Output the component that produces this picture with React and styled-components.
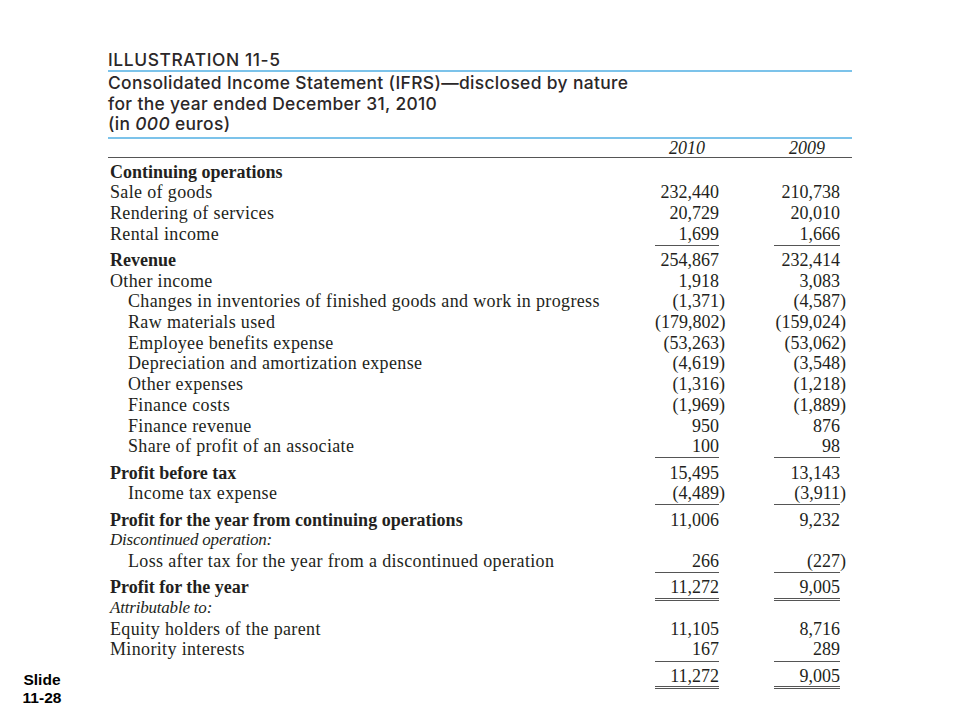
import styled, { createGlobalStyle } from 'styled-components';

//region [[ Styles ]]
const GlobalStyle = createGlobalStyle`
    html, body {
        margin: 0;
        padding: 0;
        background: #ffffff;
    }
`;

const Page = styled.div`
    width: 960px;
    height: 720px;
    display: grid;
    grid-template-columns: 108px 744px;
    color: #231f20;
`;

const SlideTag = styled.div`
    align-self: end;
    width: 84px;
    padding-bottom: 13px;
    text-align: center;
    font-family: 'Liberation Sans', Arial, sans-serif;
    font-weight: 700;
    font-size: 15.5px;
    line-height: 18px;
    color: #000000;
`;

const Statement = styled.div`
    padding-top: 50px;
    display: flex;
    flex-direction: column;
`;

const Heading = styled.div`
    font-family: Inter, 'Liberation Sans', sans-serif;
    font-weight: 500;
    font-size: 17.4px;
    letter-spacing: 0.35px;
    color: #2b2728;
    border-bottom: 2px solid #7cc3ea;
`;

const Illustration = styled(Heading)`
    line-height: 20px;
    letter-spacing: 0.6px;
`;

const TitleBlock = styled(Heading)`
    padding: 1px 0 2px;
    line-height: 20.5px;

    em {
        font-style: italic;
    }
`;

const Grid = styled.div`
    display: grid;
    grid-template-columns: 1fr 64px 66px;
    column-gap: 55px;
    padding-right: 12px;
    font-family: 'Liberation Serif', 'Times New Roman', serif;
`;

const YearRow = styled(Grid)`
    line-height: 18px;
    font-size: 18px;
    font-style: italic;
    border-bottom: 1.5px solid #555555;
    margin-bottom: 4px;
`;

const Year = styled.div`
    text-align: center;
`;

const Row = styled(Grid)`
    font-size: 18px;
    line-height: 20.7px;
    margin-top: ${(p) => (p.$spaced ? '5.6px' : '0')};
`;

const Label = styled.div`
    padding-left: ${(p) => (p.$indent ? '20px' : '2px')};
    font-weight: ${(p) => (p.$bold ? 700 : 400)};
    font-style: ${(p) => (p.$italic ? 'italic' : 'normal')};
    font-size: ${(p) => (p.$italic ? '17px' : '18px')};
    letter-spacing: ${(p) => (p.$bold ? '0' : p.$italic ? '-0.2px' : '0.35px')};
    white-space: nowrap;
`;

const Amount = styled.div`
    text-align: right;
    white-space: nowrap;
    font-size: 18px;
    border-bottom: ${(p) =>
        p.$rule === 'double'
            ? '3px double #555555'
            : p.$rule === 'single'
              ? '1.5px solid #555555'
              : 'none'};
    margin-bottom: ${(p) =>
        p.$rule === 'double' ? '-3px' : p.$rule === 'single' ? '-1.5px' : '0'};
`;

const Close = styled.span`
    margin-right: -6px;
`;
//endregion [[ Styles ]]

const rows = [
    { label: 'Continuing operations', bold: true },
    { label: 'Sale of goods', a: '232,440', b: '210,738' },
    { label: 'Rendering of services', a: '20,729', b: '20,010' },
    { label: 'Rental income', a: '1,699', b: '1,666', rule: 'single' },
    { label: 'Revenue', bold: true, a: '254,867', b: '232,414', spaced: true },
    { label: 'Other income', a: '1,918', b: '3,083' },
    { label: 'Changes in inventories of finished goods and work in progress', indent: true, a: '(1,371)', b: '(4,587)' },
    { label: 'Raw materials used', indent: true, a: '(179,802)', b: '(159,024)' },
    { label: 'Employee benefits expense', indent: true, a: '(53,263)', b: '(53,062)' },
    { label: 'Depreciation and amortization expense', indent: true, a: '(4,619)', b: '(3,548)' },
    { label: 'Other expenses', indent: true, a: '(1,316)', b: '(1,218)' },
    { label: 'Finance costs', indent: true, a: '(1,969)', b: '(1,889)' },
    { label: 'Finance revenue', indent: true, a: '950', b: '876' },
    { label: 'Share of profit of an associate', indent: true, a: '100', b: '98', rule: 'single' },
    { label: 'Profit before tax', bold: true, a: '15,495', b: '13,143', spaced: true },
    { label: 'Income tax expense', indent: true, a: '(4,489)', b: '(3,911)', rule: 'single' },
    { label: 'Profit for the year from continuing operations', bold: true, a: '11,006', b: '9,232', spaced: true },
    { label: 'Discontinued operation:', italic: true },
    { label: 'Loss after tax for the year from a discontinued operation', indent: true, a: '266', b: '(227)', rule: 'single' },
    { label: 'Profit for the year', bold: true, a: '11,272', b: '9,005', rule: 'double', spaced: true },
    { label: 'Attributable to:', italic: true },
    { label: 'Equity holders of the parent', a: '11,105', b: '8,716' },
    { label: 'Minority interests', a: '167', b: '289', rule: 'single' },
    { label: '', a: '11,272', b: '9,005', rule: 'double', spaced: true },
];

// negative figures hang their closing parenthesis past the column edge
function Figure({ value, rule }) {
    if (value === undefined) return <Amount />;
    const neg = value.endsWith(')');
    return (
        <Amount $rule={rule}>
            {neg ? value.slice(0, -1) : value}
            {neg && <Close>)</Close>}
        </Amount>
    );
}

function App() {
    return (
        <>
            <GlobalStyle />
            <Page>
                <SlideTag>
                    Slide
                    <br />
                    11-28
                </SlideTag>
                <Statement>
                    <Illustration>ILLUSTRATION 11-5</Illustration>
                    <TitleBlock>
                        Consolidated Income Statement (IFRS)—disclosed by nature
                        <br />
                        for the year ended December 31, 2010
                        <br />
                        (in <em>000</em> euros)
                    </TitleBlock>
                    <YearRow>
                        <div />
                        <Year>2010</Year>
                        <Year>2009</Year>
                    </YearRow>
                    {rows.map((r, i) => (
                        <Row key={i} $spaced={r.spaced}>
                            <Label $indent={r.indent} $bold={r.bold} $italic={r.italic}>
                                {r.label}
                            </Label>
                            <Figure value={r.a} rule={r.rule} />
                            <Figure value={r.b} rule={r.rule} />
                        </Row>
                    ))}
                </Statement>
            </Page>
        </>
    );
}

export default App;
